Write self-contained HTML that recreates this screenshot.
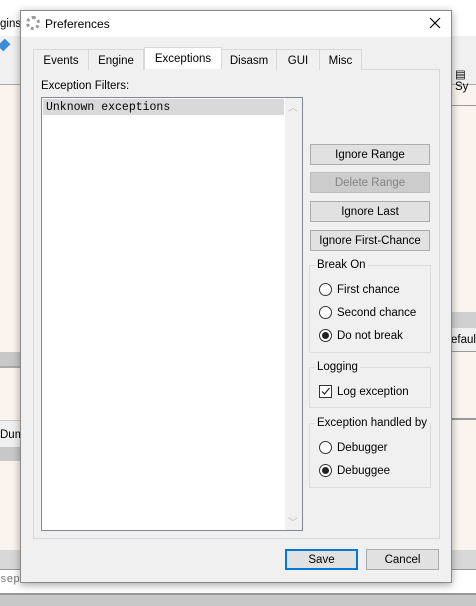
<!DOCTYPE html>
<html><head><meta charset="utf-8"><style>
*{margin:0;padding:0;box-sizing:border-box}
body{width:476px;height:606px;overflow:hidden;position:relative;background:#fbf4ee;font-family:"Liberation Sans",sans-serif;font-size:11.5px;color:#000}
.a{position:absolute}
.btn{position:absolute;background:#e1e1e1;border:1px solid #adadad;text-align:center;line-height:20px;font-size:11.5px}
.grp{position:absolute;border:1px solid #dcdcdc}
.lg{position:absolute;background:#f0f0f0;padding:0 2px;font-size:11.5px;line-height:14px}
.rad{position:absolute;width:13px;height:13px;border:1px solid #333;border-radius:50%;background:#fff}
.rad.on::after{content:"";position:absolute;left:2px;top:2px;width:7px;height:7px;border-radius:50%;background:#222}
.lbl{position:absolute;font-size:11.5px;line-height:15px}
.tab{position:absolute;top:49px;height:21px;border:1px solid #d9d9d9;border-bottom:none;background:#f0f0f0;text-align:center;line-height:23px;font-size:11.5px}
</style></head><body>
<div class="a" style="left:0;top:0;width:476px;height:36px;background:#fff"></div>
<div class="a" style="left:0;top:18px">gins</div>
<div class="a" style="left:0;top:36px;width:476px;height:24px;background:#f0f0f0"></div>
<div class="a" style="left:0;top:40px;width:8px;height:10px;background:#3b8bd6;transform:rotate(45deg)"></div>
<div class="a" style="left:0;top:60px;width:476px;height:25px;background:#f0f0f0;border-bottom:1px solid #aaa"></div>
<div class="a" style="left:455px;top:67px">▤ Sy</div>
<div class="a" style="left:451px;top:105px;width:25px;height:1px;background:#999"></div>
<div class="a" style="left:0;top:352px;width:21px;height:16px;background:#c8c8c8;border-bottom:2px solid #aaa"></div>
<div class="a" style="left:451px;top:312px;width:25px;height:16px;background:#d0d0d0"></div>
<div class="a" style="left:451px;top:328px;width:25px;height:24px;background:#f0f0f0;border-bottom:1px solid #999"></div>
<div class="a" style="left:451px;top:334px">efaul</div>
<div class="a" style="left:0;top:420px;width:21px;height:27px;background:#f0f0f0;border-top:1px solid #ccc"></div>
<div class="a" style="left:0;top:429px">Dum</div>
<div class="a" style="left:0;top:447px;width:21px;height:14px;background:#c8c8c8"></div>
<div class="a" style="left:451px;top:418px;width:25px;height:2px;background:#999"></div>
<div class="a" style="left:0;top:550px;width:476px;height:20px;background:#d8d8d8;border-bottom:1px solid #999"></div>
<div class="a" style="left:0;top:570px;width:476px;height:25px;background:#fff"></div>
<div class="a" style="left:0;top:574px;font-family:'Liberation Mono',monospace;font-size:11px;color:#777">sep</div>
<div class="a" style="left:0;top:593px;width:476px;height:13px;background:#c8c8c8;border-top:2px solid #999"></div>
<div class="a" style="left:20px;top:10px;width:432px;height:573px;background:#f0f0f0;border:1px solid #8a8a8a;box-shadow:0 2px 8px rgba(0,0,0,.35)"></div>
<div class="a" style="left:21px;top:11px;width:430px;height:26px;background:#fff"></div>
<div class="a" style="left:26px;top:16px;width:14px;height:14px;border-radius:50%;border:3px dotted #999"></div>
<div class="a" style="left:45px;top:17px;font-size:12px">Preferences</div>
<svg class="a" style="left:429px;top:17px" width="12" height="12"><path d="M1 1L11 11M11 1L1 11" stroke="#000" stroke-width="1.2"/></svg>
<div class="a" style="left:33px;top:69px;width:407px;height:470px;border:1px solid #d9d9d9;background:#fff"></div>
<div class="tab" style="left:33px;width:56px">Events</div>
<div class="tab" style="left:88px;width:56px">Engine</div>
<div class="tab" style="left:221px;width:56px">Disasm</div>
<div class="tab" style="left:276px;width:44px">GUI</div>
<div class="tab" style="left:319px;width:43px">Misc</div>
<div class="a" style="left:34px;top:70px;width:405px;height:468px;background:#f0f0f0"></div>
<div class="a" style="left:144px;top:47px;width:78px;height:24px;border:1px solid #d9d9d9;border-bottom:none;background:#fff;text-align:center;line-height:22px">Exceptions</div>
<div class="a" style="left:144px;top:69px;width:78px;height:2px;background:#f0f0f0"></div>
<div class="a" style="left:41px;top:80px">Exception Filters:</div>
<div class="a" style="left:41px;top:97px;width:262px;height:434px;border:1px solid #828790;background:#fff"></div>
<div class="a" style="left:43px;top:99px;width:241px;height:16px;background:#d9d9d9"></div>
<div class="a" style="left:46px;top:101px;font-family:'Liberation Mono',monospace;font-size:11.5px">Unknown exceptions</div>
<div class="a" style="left:285px;top:98px;width:17px;height:432px;background:#f0f0f0"></div>
<div class="a" style="left:288px;top:99px;color:#bbb;font-size:10px">︿</div>
<div class="a" style="left:288px;top:514px;color:#bbb;font-size:10px">﹀</div>
<div class="btn" style="left:310px;top:144px;width:120px;height:21px">Ignore Range</div>
<div class="btn" style="left:310px;top:172px;width:120px;height:21px;background:#cccccc;border-color:#bfbfbf;color:#838383">Delete Range</div>
<div class="btn" style="left:310px;top:201px;width:120px;height:21px">Ignore Last</div>
<div class="btn" style="left:310px;top:230px;width:120px;height:21px">Ignore First-Chance</div>
<div class="grp" style="left:309px;top:265px;width:122px;height:88px"></div>
<div class="lg" style="left:315px;top:258px">Break On</div>
<div class="rad" style="left:319px;top:283px"></div><div class="lbl" style="left:337px;top:283px">First chance</div>
<div class="rad" style="left:319px;top:306px"></div><div class="lbl" style="left:337px;top:306px">Second chance</div>
<div class="rad on" style="left:319px;top:329px"></div><div class="lbl" style="left:337px;top:329px">Do not break</div>
<div class="grp" style="left:309px;top:367px;width:122px;height:41px"></div>
<div class="lg" style="left:315px;top:360px">Logging</div>
<div class="a" style="left:319px;top:385px;width:13px;height:13px;border:1px solid #333;background:#fff"></div>
<svg class="a" style="left:320px;top:386px" width="11" height="11"><path d="M2 5.5L4.5 8L9.5 2" stroke="#222" stroke-width="1.2" fill="none"/></svg>
<div class="lbl" style="left:337px;top:385px">Log exception</div>
<div class="grp" style="left:309px;top:423px;width:122px;height:65px"></div>
<div class="lg" style="left:315px;top:416px">Exception handled by</div>
<div class="rad" style="left:319px;top:441px"></div><div class="lbl" style="left:337px;top:441px">Debugger</div>
<div class="rad on" style="left:319px;top:464px"></div><div class="lbl" style="left:337px;top:464px">Debuggee</div>
<div class="btn" style="left:285px;top:549px;width:73px;height:21px;border:2px solid #0078d7;line-height:19px">Save</div>
<div class="btn" style="left:366px;top:549px;width:73px;height:21px">Cancel</div>
</body></html>
